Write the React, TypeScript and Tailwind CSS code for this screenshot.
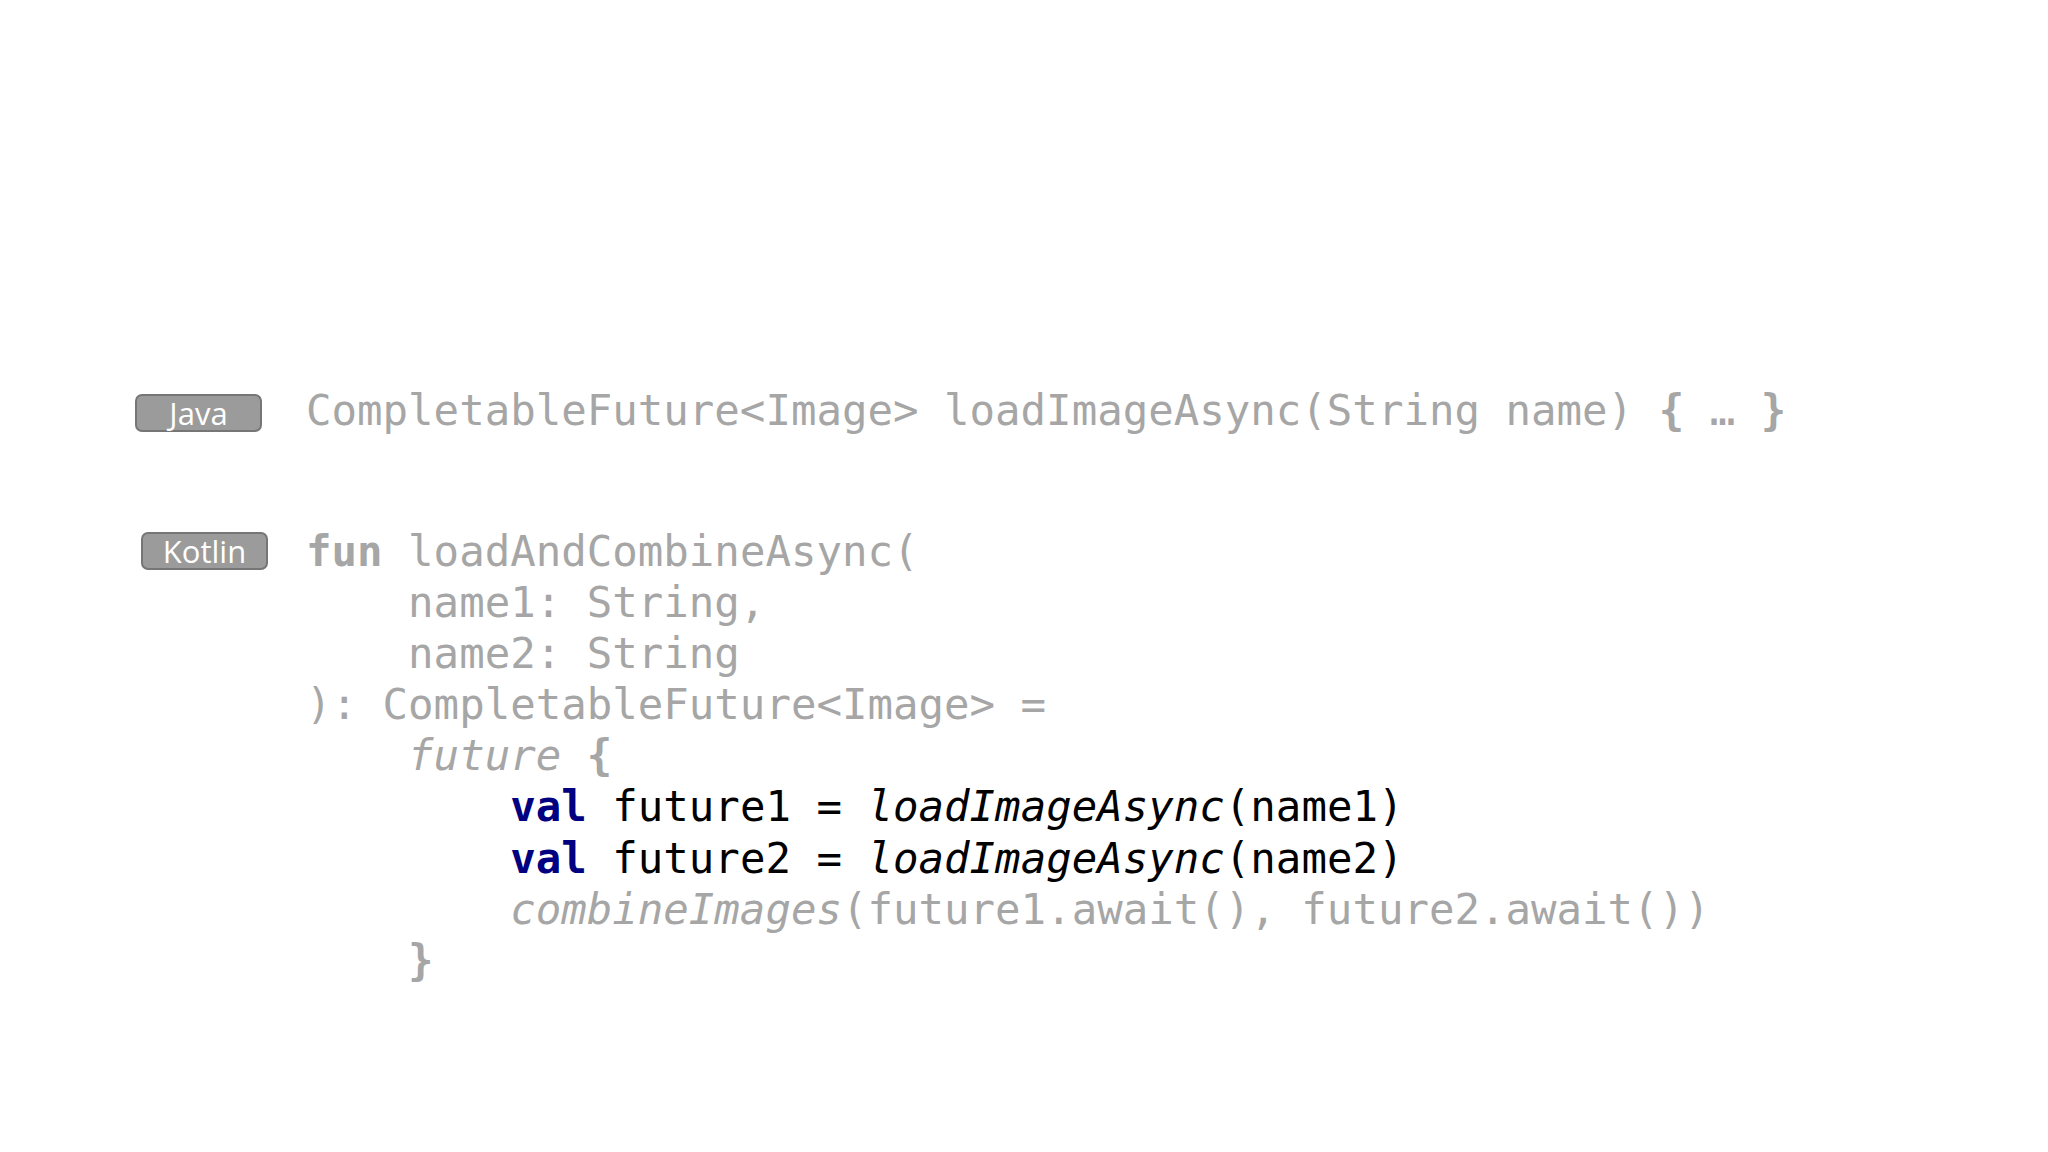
const mono = { fontFamily: '"DejaVu Sans Mono", "Liberation Mono", monospace' }

const Badge = ({ label, className }: { label: string; className?: string }) => (
  <div
    className={`flex h-[38px] w-[127px] items-center justify-center rounded-[7px] border-2 border-[#767676] bg-[#9b9b9b] text-[31px] leading-none text-white ${className ?? ''}`}
    style={{ fontFamily: '"Open Sans", "Noto Sans", sans-serif' }}
  >
    {label}
  </div>
)

const G = ({ children }: { children: React.ReactNode }) => (
  <span className="text-[#a6a6a6]">{children}</span>
)
const GB = ({ children }: { children: React.ReactNode }) => (
  <span className="font-bold text-[#a6a6a6]">{children}</span>
)
const GI = ({ children }: { children: React.ReactNode }) => (
  <span className="italic text-[#a6a6a6]">{children}</span>
)
const KW = ({ children }: { children: React.ReactNode }) => (
  <span className="font-bold text-[#000080]">{children}</span>
)
const I = ({ children }: { children: React.ReactNode }) => (
  <span className="italic text-black">{children}</span>
)

export default function App() {
  return (
    <div className="h-[1152px] w-[2048px] overflow-hidden bg-white">
      <div className="flex flex-col pl-[135px] pt-[385px]">
        <div className="flex items-start">
          <div className="w-[171px] shrink-0 pt-[9px]">
            <Badge label="Java" />
          </div>
          <pre className="text-[42.4px] leading-[51px]" style={mono}>
            <G>CompletableFuture&lt;Image&gt; loadImageAsync(String name) </G>
            <GB>{'{'}</GB>
            <G> … </G>
            <GB>{'}'}</GB>
          </pre>
        </div>

        <div className="mt-[90px] flex items-start">
          <div className="w-[171px] shrink-0 pl-[6px] pt-[6px]">
            <Badge label="Kotlin" />
          </div>
          <pre className="text-[42.4px] leading-[51.1px]" style={mono}>
            <GB>fun</GB>
            <G> loadAndCombineAsync(</G>
            {'\n'}
            <G>    name1: String,</G>
            {'\n'}
            <G>    name2: String</G>
            {'\n'}
            <G>): CompletableFuture&lt;Image&gt; =</G>
            {'\n'}
            {'    '}
            <GI>future</GI>
            <G> </G>
            <GB>{'{'}</GB>
            {'\n'}
            {'        '}
            <KW>val</KW>
            <span className="text-black"> future1 = </span>
            <I>loadImageAsync</I>
            <span className="text-black">(name1)</span>
            {'\n'}
            {'        '}
            <KW>val</KW>
            <span className="text-black"> future2 = </span>
            <I>loadImageAsync</I>
            <span className="text-black">(name2)</span>
            {'\n'}
            {'        '}
            <GI>combineImages</GI>
            <G>(future1.await(), future2.await())</G>
            {'\n'}
            {'    '}
            <GB>{'}'}</GB>
          </pre>
        </div>
      </div>
    </div>
  )
}
